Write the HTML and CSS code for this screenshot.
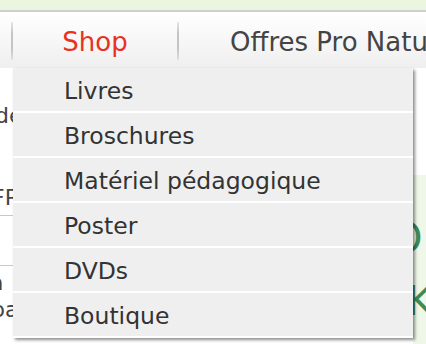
FILE: index.html
```html
<!DOCTYPE html>
<html lang="fr">
<head>
    <meta charset="UTF-8">
    <meta name="viewport" content="width=device-width, initial-scale=1.0">
    <title>Shop</title>
    <link rel="stylesheet" href="styles.css">
</head>
<body>
    <div class="bandeau"></div>
    <nav class="menu">
        <span class="separateur"></span>
        <div class="menu-item actif">
            Shop
            <ul class="sous-menu">
                <li>Livres</li>
                <li>Broschures</li>
                <li>Matériel pédagogique</li>
                <li>Poster</li>
                <li>DVDs</li>
                <li>Boutique</li>
            </ul>
        </div>
        <span class="separateur"></span>
        <div class="menu-item offres">Offres Pro Natura</div>
    </nav>
    <div class="contenu">
        <div class="principal">
            <p class="ligne l1">de</p>
            <p class="ligne l2">FP</p>
            <hr class="trait t1">
            <hr class="trait t2">
            <p class="ligne l3">a</p>
            <p class="ligne l4">pa</p>
        </div>
        <div class="lateral">
            <span class="lettre l-haut">O</span>
            <span class="lettre l-bas">K</span>
        </div>
    </div>
</body>
</html>
```

FILE: styles.css
```css
body {
    margin: 0;
    font-family: "DejaVu Sans", Verdana, sans-serif;
    background-color: #fff;
    color: #333;
    overflow: hidden;
    height: 344px;
}

.bandeau {
    height: 10px;
    background-color: #ebf6e1;
    border-bottom: 2px solid #cfcfcf;
}

.menu {
    display: flex;
    height: 56px;
    background: linear-gradient(#ffffff, #efefef);
    position: relative;
    z-index: 2;
}

.separateur {
    flex-shrink: 0;
    width: 2px;
    height: 38px;
    margin-top: 10px;
    background: linear-gradient(#e6e6e6, #c4c4c4 30%, #c4c4c4 70%, #e0e0e0);
}

.separateur:first-child {
    margin-left: 11px;
}

.menu-item {
    position: relative;
    flex-shrink: 0;
    font-size: 26px;
    line-height: 56px;
    padding-top: 2px;
    box-sizing: border-box;
    color: #444;
    white-space: nowrap;
}

.actif {
    width: 164px;
    text-align: center;
    color: #e8321f;
}

.offres {
    padding-left: 51px;
}

.sous-menu {
    position: absolute;
    top: 56px;
    left: 0;
    width: 400px;
    margin: 0;
    padding: 0;
    list-style: none;
    background-color: #efefef;
    text-align: left;
    box-shadow: 2px 2px 3px rgba(0, 0, 0, 0.45);
}

.sous-menu li {
    height: 45px;
    line-height: 40px;
    padding: 3px 0 0 51px;
    box-sizing: border-box;
    border-bottom: 2px solid #fff;
    font-size: 23.5px;
    color: #333;
}

.contenu {
    display: flex;
    height: 276px;
}

.principal {
    width: 413px;
    flex-shrink: 0;
}

.ligne {
    margin: 0;
    font-size: 22px;
    line-height: 24px;
    color: #444;
    white-space: nowrap;
}

.l1 {
    margin-top: 36px;
    margin-left: -5px;
}

.l2 {
    margin-top: 58px;
    margin-left: -8px;
}

.trait {
    margin: 0;
    border: none;
    border-top: 1px solid #c8c8c8;
    width: 100%;
}

.t1 {
    margin-top: 5px;
}

.t2 {
    margin-top: 49px;
}

.l3 {
    margin-top: 5px;
    margin-left: -10px;
}

.l4 {
    margin-top: 3px;
    margin-left: -9px;
}

.lateral {
    flex: 1;
    margin-top: 107px;
    background-color: #eef7e8;
    position: relative;
}

.lettre {
    position: absolute;
    color: #3b8c58;
    font-size: 40px;
    line-height: 40px;
}

.l-haut {
    left: -22px;
    top: 43px;
}

.l-bas {
    left: -6px;
    top: 106px;
}
```
